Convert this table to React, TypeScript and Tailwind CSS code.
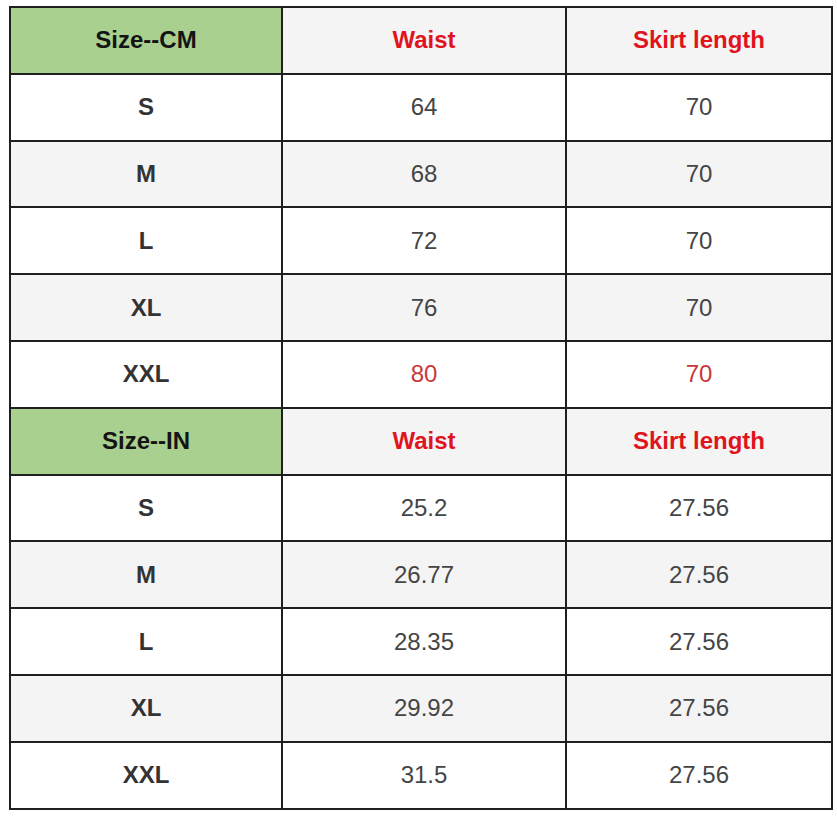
const cm = [
  ["S", "64", "70"],
  ["M", "68", "70"],
  ["L", "72", "70"],
  ["XL", "76", "70"],
  ["XXL", "80", "70"],
];

const inch = [
  ["S", "25.2", "27.56"],
  ["M", "26.77", "27.56"],
  ["L", "28.35", "27.56"],
  ["XL", "29.92", "27.56"],
  ["XXL", "31.5", "27.56"],
];

function Header({ label }: { label: string }) {
  return (
    <>
      <div className="flex h-[64.8px] items-center justify-center bg-[#a9d08e] text-[24px] font-bold text-[#141414]">
        {label}
      </div>
      <div className="flex h-[64.8px] items-center justify-center bg-[#f4f4f4] text-[24px] font-bold text-[#e0141e]">
        Waist
      </div>
      <div className="flex h-[64.8px] items-center justify-center bg-[#f4f4f4] text-[24px] font-bold text-[#e0141e]">
        Skirt length
      </div>
    </>
  );
}

function Rows({ rows }: { rows: string[][] }) {
  return (
    <>
      {rows.map((r, i) => {
        const bg = i % 2 === 1 ? "bg-[#f4f4f4]" : "bg-white";
        const red = r[0] === "XXL" && r[1] === "80";
        return (
          <div key={r[0]} className="contents">
            <div className={`flex h-[64.8px] items-center justify-center text-[24px] font-bold text-[#333333] ${bg}`}>
              {r[0]}
            </div>
            <div className={`flex h-[64.8px] items-center justify-center text-[24px] ${red ? "text-[#c8383a]" : "text-[#454545]"} ${bg}`}>
              {r[1]}
            </div>
            <div className={`flex h-[64.8px] items-center justify-center text-[24px] ${red ? "text-[#c8383a]" : "text-[#454545]"} ${bg}`}>
              {r[2]}
            </div>
          </div>
        );
      })}
    </>
  );
}

export default function App() {
  return (
    <div className="min-h-screen bg-white pl-[9px] pt-[6px]" style={{ fontFamily: '"Liberation Sans", Arial, sans-serif' }}>
      <div className="grid w-fit grid-cols-[270px_282px_264px] gap-[2px] bg-[#1f1f1f] p-[2px]">
        <Header label="Size--CM" />
        <Rows rows={cm} />
        <Header label="Size--IN" />
        <Rows rows={inch} />
      </div>
    </div>
  );
}
